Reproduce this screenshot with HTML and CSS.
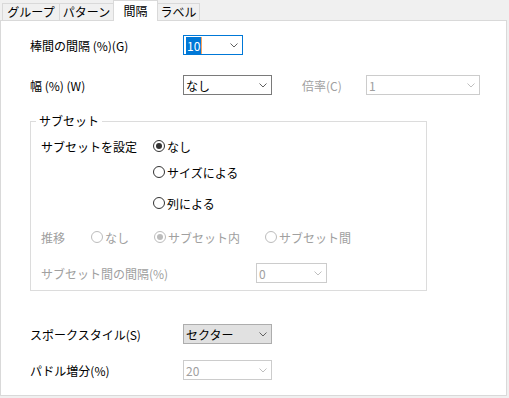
FILE: index.html
```html
<!DOCTYPE html>
<html lang="ja">
<head>
  <meta charset="UTF-8">
  <title>間隔</title>
  <link rel="stylesheet" href="styles.css">
</head>
<body>
<div class="dialog">
  <!-- Tabs -->
  <div class="tabs">
    <div class="tab t1">グループ</div>
    <div class="tab t2">パターン</div>
    <div class="tab t3 active">間隔</div>
    <div class="tab t4">ラベル</div>
  </div>

  <!-- Panel -->
  <div class="panel">
    <div class="row first">
      <span class="label">棒間の間隔 (%)(G)</span>
      <div class="combo focus w-small">
        <span><span class="sel">10</span></span>
        <svg class="chev" width="8" height="5" viewBox="0 0 8 5"><path d="M0.5 0.5L4 4L7.5 0.5" fill="none" stroke="currentColor"/></svg>
      </div>
    </div>

    <div class="row second">
      <span class="label">幅 (%) (W)</span>
      <div class="combo w-mid">
        <span>なし</span>
        <svg class="chev" width="8" height="5" viewBox="0 0 8 5"><path d="M0.5 0.5L4 4L7.5 0.5" fill="none" stroke="currentColor"/></svg>
      </div>
      <span class="label-mid disabled">倍率(C)</span>
      <div class="combo off w-wide">
        <span>1</span>
        <svg class="chev" width="8" height="5" viewBox="0 0 8 5"><path d="M0.5 0.5L4 4L7.5 0.5" fill="none" stroke="currentColor"/></svg>
      </div>
    </div>

    <fieldset class="group">
      <legend>サブセット</legend>
      <div class="group-body">
        <div class="grow r-a">
          <span class="glabel">サブセットを設定</span>
          <span class="radio checked"><span class="dot"></span>なし</span>
        </div>
        <div class="grow r-b indent">
          <span class="radio"><span class="dot"></span>サイズによる</span>
        </div>
        <div class="grow r-c indent">
          <span class="radio"><span class="dot"></span>列による</span>
        </div>
        <div class="grow r-d disabled">
          <span class="trend-label">推移</span>
          <span class="radio off w-r1"><span class="dot"></span>なし</span>
          <span class="radio off checked w-r2"><span class="dot"></span>サブセット内</span>
          <span class="radio off"><span class="dot"></span>サブセット間</span>
        </div>
        <div class="row r-e">
          <span class="gap-label disabled">サブセット間の間隔(%)</span>
          <div class="combo off w-gap">
            <span>0</span>
            <svg class="chev" width="8" height="5" viewBox="0 0 8 5"><path d="M0.5 0.5L4 4L7.5 0.5" fill="none" stroke="currentColor"/></svg>
          </div>
        </div>
      </div>
    </fieldset>

    <div class="row spoke">
      <span class="label">スポークスタイル(S)</span>
      <div class="combo button w-mid">
        <span>セクター</span>
        <svg class="chev" width="8" height="5" viewBox="0 0 8 5"><path d="M0.5 0.5L4 4L7.5 0.5" fill="none" stroke="currentColor"/></svg>
      </div>
    </div>

    <div class="row paddle">
      <span class="label">パドル増分(%)</span>
      <div class="combo off w-mid">
        <span>20</span>
        <svg class="chev" width="8" height="5" viewBox="0 0 8 5"><path d="M0.5 0.5L4 4L7.5 0.5" fill="none" stroke="currentColor"/></svg>
      </div>
    </div>
  </div>
</div>
</body>
</html>
```

FILE: styles.css
```css
* {
  margin: 0;
  padding: 0;
  box-sizing: border-box;
}

body {
  background-color: #f0f0f0;
  font-family: "Noto Sans CJK JP", "Liberation Sans", sans-serif;
  font-size: 12px;
  color: #000;
  width: 509px;
  height: 398px;
  overflow: hidden;
}

/* Tabs */
.tabs {
  display: flex;
  align-items: flex-end;
  height: 20px;
  padding-left: 2px;
}

.tab {
  height: 17px;
  line-height: 15px;
  text-align: center;
  background-color: #f0f0f0;
  border: 1px solid #d9d9d9;
  border-bottom: none;
  margin-left: -1px;
}

.t1 { width: 58px; margin-left: 0; }
.t2 { width: 55px; }
.t3 { width: 45px; }
.t4 { width: 43px; }

.tab.active {
  height: 21px;
  line-height: 19px;
  background-color: #fff;
  margin-bottom: -1px;
  position: relative;
  z-index: 1;
}

/* Panel */
.panel {
  width: 507px;
  height: 376px;
  background-color: #fff;
  border: 1px solid #d9d9d9;
  padding-left: 29px;
}

.row {
  display: flex;
  align-items: center;
  height: 20px;
}

.first { margin-top: 14px; }
.second { margin-top: 20px; }
.spoke { margin-top: 33px; }
.paddle { margin-top: 16px; }

.label {
  width: 153px;
}

.label-mid {
  width: 64px;
  margin-left: 30px;
}

.disabled {
  color: #a0a0a0;
}

/* Combo boxes */
.combo {
  height: 20px;
  display: flex;
  align-items: center;
  justify-content: space-between;
  padding: 0 4px 0 2px;
  border: 1px solid #7a7a7a;
  background-color: #fff;
  color: #000;
}

.combo .chev {
  color: #606060;
}

.combo.focus {
  border-color: #0078d7;
}

.combo .sel {
  background-color: #0078d7;
  color: #fff;
  padding: 0 1px;
  border-right: 1px solid #f7a35c;
}

.combo.off {
  border-color: #cccccc;
  color: #a0a0a0;
}

.combo.off .chev {
  color: #bfbfbf;
}

.combo.button {
  background-color: #e1e1e1;
  border-color: #adadad;
}

.w-small { width: 60px; }
.w-mid { width: 89px; }
.w-wide { width: 114px; }
.w-gap { width: 71px; }

/* Group box */
.group {
  width: 397px;
  margin-top: 18px;
  border: 1px solid #dcdcdc;
  padding: 0;
}

.group legend {
  margin-left: 5px;
  padding: 0 3px;
  line-height: 16px;
}

.group-body {
  padding: 0 0 7px 10px;
}

.grow {
  display: flex;
  align-items: center;
  height: 16px;
}

.r-a { margin-top: 9px; }
.r-b { margin-top: 10px; }
.r-c { margin-top: 15px; }
.r-d { margin-top: 18px; }
.r-e { margin-top: 18px; }

.glabel {
  width: 112px;
}

.indent {
  padding-left: 112px;
}

.trend-label {
  width: 50px;
}

.gap-label {
  width: 215px;
}

.w-r1 { width: 63px; }
.w-r2 { width: 111px; }

/* Radio buttons */
.radio {
  display: flex;
  align-items: center;
  gap: 2px;
}

.radio .dot {
  width: 12px;
  height: 12px;
  border: 1px solid #333;
  border-radius: 50%;
  display: flex;
  align-items: center;
  justify-content: center;
}

.radio.checked .dot::after {
  content: "";
  width: 6px;
  height: 6px;
  border-radius: 50%;
  background-color: #333;
}

.radio.off .dot {
  border-color: #bcbcbc;
}

.radio.off.checked .dot::after {
  background-color: #bcbcbc;
}
```
